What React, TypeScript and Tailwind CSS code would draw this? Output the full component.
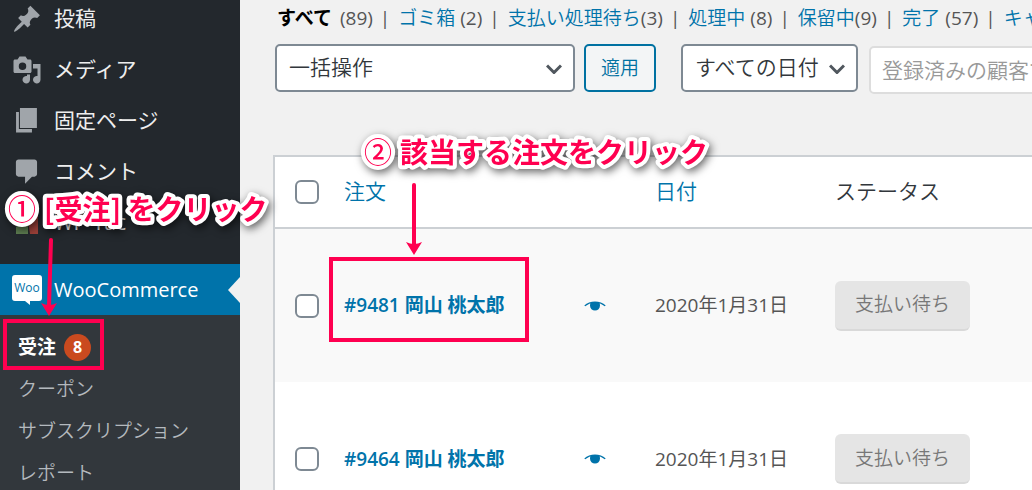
import React, { useState } from 'react';

interface MenuItem {
    label: string;
    icon: React.ReactNode;
}

interface Order {
    id: number;
    customer: string;
    date: string;
    status: string;
}

// --- Icons ---
const PinIcon = () => (
    <svg viewBox="0 0 20 20" className="w-[30px] h-[30px] fill-[#a0a5aa]">
        <path d="M10.44 3.02l1.82-1.82 6.36 6.35-1.83 1.82c-1.05-.68-2.48-.57-3.41.36l-.75.75c-.92.93-1.04 2.35-.35 3.41l-1.83 1.82-2.41-2.41-2.8 2.79c-.42.42-3.38 2.71-3.8 2.29s1.86-3.39 2.28-3.81l2.79-2.79L4.1 9.36l1.83-1.82c1.05.69 2.48.57 3.4-.36l.75-.75c.93-.92 1.05-2.35.36-3.41z" />
    </svg>
);

const MediaIcon = () => (
    <svg viewBox="0 0 20 20" className="w-[30px] h-[30px] fill-[#a0a5aa]">
        <path fillRule="evenodd" d="M13 11V4c0-.55-.45-1-1-1h-1.67L9 1H5L3.67 3H2c-.55 0-1 .45-1 1v7c0 .55.45 1 1 1h10c.55 0 1-.45 1-1zM7 5a2.500 2.500 0 1 1 0 5 2.500 2.500 0 0 1 0-5z" />
        <path d="M14 6h5v10.500a2.500 2.500 0 1 1-2-2.450V9h-3zm-4 8.050V13h2v3.500a2.500 2.500 0 1 1-2-2.450z" />
    </svg>
);

const PagesIcon = () => (
    <svg viewBox="0 0 20 20" className="w-[30px] h-[30px] fill-[#a0a5aa]">
        <path d="M5.300 14.600V1.300h11.300v13.300zM2.700 4h1.900v11.300h8.700v2.400H2.700z" />
    </svg>
);

const CommentIcon = () => (
    <svg viewBox="0 0 20 20" className="w-[30px] h-[30px] fill-[#a0a5aa]">
        <path d="M4.300 1.700h10.700c.9 0 1.700.8 1.700 1.700v8c0 .9-.8 1.700-1.700 1.700h-1.700l-4.600 4.700v-4.700H4.300c-.9 0-1.700-.8-1.700-1.700v-8c0-.9.8-1.700 1.700-1.700z" />
    </svg>
);

const PluginIcon = () => (
    <svg viewBox="0 0 22 22" className="w-[22px] h-[22px]">
        <path fill="#3c5a46" d="M0 0h11v22H0z" />
        <path fill="#a8905a" d="M3 8l8-2v9l-6 2z" />
        <path fill="#5f7f52" d="M0 15l12-4v11H0z" />
        <path fill="#9a4038" d="M11 0h11v22h-8z" />
    </svg>
);

const WooIcon = () => (
    <svg viewBox="0 0 30 30" className="w-[30px] h-[30px]">
        <path fill="#fff" d="M3 0h24a3 3 0 0 1 3 3v20a3 3 0 0 1-3 3h-9v4l-5-4H3a3 3 0 0 1-3-3V3a3 3 0 0 1 3-3z" />
        <text x="15" y="17" textAnchor="middle" fontSize="12" fill="#0073aa">Woo</text>
    </svg>
);

const EyeIcon = () => (
    <svg viewBox="0 0 22 12" className="w-[22px] h-[12px]">
        <path fill="#0073aa" d="M.3 5.400C5.500.3 16.500.3 21.700 5.400l-1 .9C18.500 4.600 17 3.900 15.600 3.500c.3.700.4 1.400.4 2.100a5 5 0 0 1-10 0c0-.7.1-1.400.4-2.100C5 3.900 3.500 4.600 1.300 6.300z" />
    </svg>
);

const ChevronIcon = () => (
    <svg viewBox="0 0 16 10" className="pointer-events-none absolute right-[13px] top-5 w-4 h-[10px]">
        <path fill="none" stroke="#50575e" strokeWidth="3" d="M1 1.500l7 7 7-7" />
    </svg>
);

const MENU: MenuItem[] = [
    { label: '投稿', icon: <PinIcon /> },
    { label: 'メディア', icon: <MediaIcon /> },
    { label: '固定ページ', icon: <PagesIcon /> },
    { label: 'コメント', icon: <CommentIcon /> },
    { label: 'WP-Tac', icon: <PluginIcon /> },
];

const SUBMENU = ['クーポン', 'サブスクリプション', 'レポート'];

const FILTERS = [
    { label: 'ゴミ箱', count: 2, spaced: true },
    { label: '支払い処理待ち', count: 3, spaced: false },
    { label: '処理中', count: 8, spaced: true },
    { label: '保留中', count: 9, spaced: false },
    { label: '完了', count: 57, spaced: true },
    { label: 'キャンセル', count: 13, spaced: true },
];

const ORDERS: Order[] = [
    { id: 9481, customer: '岡山 桃太郎', date: '2020年1月31日', status: '支払い待ち' },
    { id: 9464, customer: '岡山 桃太郎', date: '2020年1月31日', status: '支払い待ち' },
];

const checkboxClass = 'block appearance-none w-6 h-6 rounded-md border-2 border-[#7e8993] bg-white checked:bg-[#0073aa]';
const selectClass = 'appearance-none w-full h-12 pl-3 rounded-[5px] border-2 border-[#7e8993] bg-white text-[21px] text-[#32373c]';

// --- Sidebar ---
const Sidebar = () => (
    <nav className="w-60 shrink-0 overflow-hidden bg-[#23282d] text-[21px] text-[#eee]">
        <ul className="-mt-[7px] mb-4">
            {MENU.map(item => (
                <li key={item.label}>
                    <a href="#" className="flex items-center h-[51px]">
                        <span className="flex justify-center w-[54px]">{item.icon}</span>
                        {item.label}
                    </a>
                </li>
            ))}
        </ul>
        <a href="#" className="flex items-center justify-between h-[51px] bg-[#0073aa] text-xl text-white">
            <span className="flex items-center">
                <span className="flex justify-center w-[54px]"><WooIcon /></span>
                WooCommerce
            </span>
            <span className="w-0 h-0 border-y-[13px] border-y-transparent border-r-[12px] border-r-[#f1f1f1]" />
        </a>
        <ul className="py-[11px] bg-[#32373c] text-[19px] text-[#b4b9be]">
            <li>
                <a href="#" className="flex items-center gap-2 h-[42px] pl-[18px] font-bold text-white">
                    受注
                    <span className="flex items-center justify-center w-[27px] h-[27px] rounded-full bg-[#ca4a1f] text-base">8</span>
                </a>
            </li>
            {SUBMENU.map(label => (
                <li key={label}>
                    <a href="#" className="flex items-center h-[42px] pl-[18px] font-[350]">{label}</a>
                </li>
            ))}
        </ul>
    </nav>
);

// --- Annotations drawn over the screen ---
const Callout: React.FC<{ mark: string; text: string; className: string }> = ({ mark, text, className }) => (
    <svg className={`absolute w-[360px] h-10 overflow-visible text-[28px] drop-shadow-[2px_3px_4px_rgba(0,0,0,0.6)] ${className}`}>
        <circle cx="14" cy="20" r="15" fill="#fff" />
        <g fill="#ff0050" stroke="#fff" strokeWidth="8" strokeLinejoin="round" paintOrder="stroke">
            <text x="0" y="30" fontWeight="500">{mark}</text>
            <text x="36" y="30" fontWeight="700">{text}</text>
        </g>
    </svg>
);

const Annotations = () => (
    <div className="pointer-events-none absolute inset-0 font-['Noto_Sans_CJK_JP',sans-serif]">
        <Callout mark="①" text="[受注] をクリック" className="left-2 top-[190px]" />
        <Callout mark="②" text="該当する注文をクリック" className="left-[364px] top-[133px]" />
        <svg viewBox="0 0 16 78" className="absolute left-[41px] top-[238px] w-4 h-[78px]">
            <path d="M10 2L8 68" stroke="#ff0050" strokeWidth="4" strokeLinecap="round" />
            <path d="M0 65q8 4 16 0L8 78z" fill="#ff0050" />
        </svg>
        <svg viewBox="0 0 16 72" className="absolute left-[406px] top-[183px] w-4 h-[72px]">
            <path d="M8 2v62" stroke="#ff0050" strokeWidth="4" strokeLinecap="round" />
            <path d="M0 59q8 4 16 0L8 72z" fill="#ff0050" />
        </svg>
        <div className="absolute left-[3px] top-[319px] w-[101px] h-[51px] border-4 border-[#ff0050]" />
        <div className="absolute left-[329px] top-[257px] w-[200px] h-[85px] border-4 border-[#ff0050]" />
    </div>
);

// --- Main Page Component ---
const App: React.FC = () => {
    const [selected, setSelected] = useState<number[]>([]);

    const toggle = (id: number) => {
        setSelected(prev => prev.includes(id) ? prev.filter(x => x !== id) : [...prev, id]);
    };

    const allSelected = selected.length === ORDERS.length;

    return (
        <div className="relative flex h-screen overflow-hidden bg-[#f1f1f1] font-['Open_Sans','Noto_Sans_CJK_JP',sans-serif] text-[#555]">
            <Sidebar />
            <main className="flex-1 min-w-0 overflow-hidden pl-[33px]">
                <ul className="flex gap-[7px] pl-1 pt-1 whitespace-nowrap text-[19px] leading-7">
                    <li className="flex gap-2">
                        <a href="#" className="font-bold text-black">すべて</a>
                        <span>(89)</span>
                    </li>
                    {FILTERS.map(f => (
                        <li key={f.label} className="flex gap-2">
                            <span>|</span>
                            <span>
                                <a href="#" className="font-[350] text-[#0073aa]">{f.label}</a>
                                {f.spaced ? ' ' : ''}({f.count})
                            </span>
                        </li>
                    ))}
                </ul>

                <div className="flex pt-3 pl-[2px] font-[350]">
                    <div className="relative w-[300px] shrink-0">
                        <select aria-label="一括操作" className={selectClass}>
                            <option>一括操作</option>
                        </select>
                        <ChevronIcon />
                    </div>
                    <button type="button" className="ml-[9px] w-[72px] h-12 shrink-0 rounded-[5px] border-2 border-[#0071a1] bg-[#f3f5f6] text-[19px] text-[#0071a1]">適用</button>
                    <div className="relative ml-[25px] w-[177px] shrink-0">
                        <select aria-label="すべての日付" className={selectClass}>
                            <option>すべての日付</option>
                        </select>
                        <ChevronIcon />
                    </div>
                    <input type="text" aria-label="顧客" placeholder="登録済みの顧客で絞り込む" className="ml-[11px] mt-[2px] w-[360px] h-12 shrink-0 rounded-[5px] border-2 border-[#ddd] bg-white px-[11px] text-[21px] placeholder:text-[#999]" />
                </div>

                <table className="mt-[61px] w-full table-fixed border-collapse bg-white text-left text-[19px]">
                    <thead className="text-[21px] text-[#0073aa]">
                        <tr className="h-[72px] border-2 border-r-0 border-[#ccd0d4]">
                            <th className="w-[70px] pl-5">
                                <input type="checkbox" aria-label="すべて選択" checked={allSelected} onChange={() => setSelected(allSelected ? [] : ORDERS.map(o => o.id))} className={checkboxClass} />
                            </th>
                            <th className="w-[240px] font-[350]"><a href="#">注文</a></th>
                            <th className="w-[71px]"></th>
                            <th className="w-[180px] font-[350]"><a href="#">日付</a></th>
                            <th className="font-[350] text-[#32373c]">ステータス</th>
                        </tr>
                    </thead>
                    <tbody>
                        {ORDERS.map(order => (
                            <tr key={order.id} className="h-[154px] border-l-2 border-[#ccd0d4] odd:bg-[#f9f9f9]">
                                <td className="pl-5">
                                    <input type="checkbox" aria-label={`#${order.id}`} checked={selected.includes(order.id)} onChange={() => toggle(order.id)} className={checkboxClass} />
                                </td>
                                <td>
                                    <a href="#" className="font-semibold text-[#0073aa]">#{order.id} {order.customer}</a>
                                </td>
                                <td>
                                    <button type="button" aria-label="プレビュー" className="block"><EyeIcon /></button>
                                </td>
                                <td>{order.date}</td>
                                <td>
                                    <span className="inline-flex items-center h-[50px] px-5 rounded-md border-b-2 border-black/5 bg-[#e5e5e5] font-[350] text-[#777]">{order.status}</span>
                                </td>
                            </tr>
                        ))}
                    </tbody>
                </table>
            </main>
            <Annotations />
        </div>
    );
};

export default App;
